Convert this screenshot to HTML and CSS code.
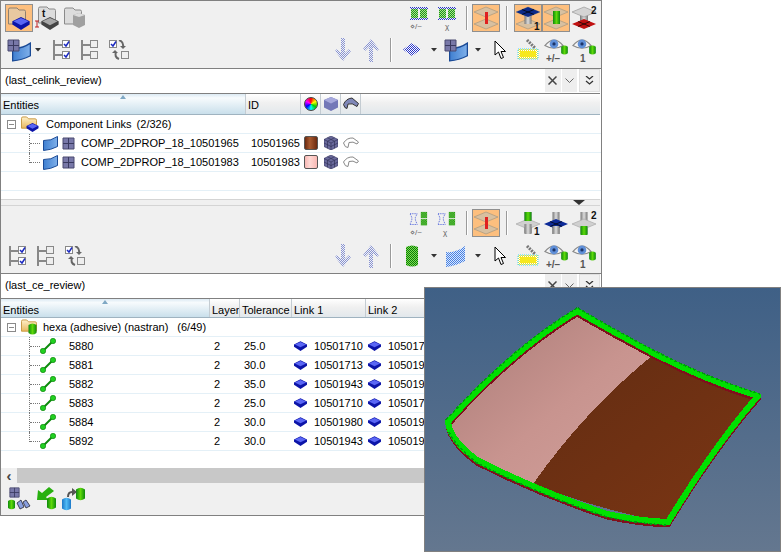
FILE: index.html
```html
<!DOCTYPE html>
<html lang="en">
<head>
<meta charset="utf-8">
<title>Entity review</title>
<link rel="stylesheet" href="styles.css">
</head>
<body>
<svg class="defs" width="0" height="0" aria-hidden="true">
  <defs>
    <linearGradient id="gBlue" x1="0" x2="1"><stop offset="0" stop-color="#3f7fd0"/><stop offset="1" stop-color="#7fb0ea"/></linearGradient>
    <linearGradient id="gGreen" x1="0" x2="1"><stop offset="0" stop-color="#0c8a0c"/><stop offset=".5" stop-color="#5ed80a"/><stop offset="1" stop-color="#0c8a0c"/></linearGradient>
    <linearGradient id="gCyl" x1="0" x2="1"><stop offset="0" stop-color="#777"/><stop offset=".5" stop-color="#ddd"/><stop offset="1" stop-color="#777"/></linearGradient>
    <linearGradient id="gAqua" x1="0" x2="1"><stop offset="0" stop-color="#1c78c8"/><stop offset=".5" stop-color="#50baf5"/><stop offset="1" stop-color="#1c78c8"/></linearGradient>
    <linearGradient id="gFold" x1="0" x2="0" y2="1"><stop offset="0" stop-color="#fff0c8"/><stop offset="1" stop-color="#e8b860"/></linearGradient>
    <linearGradient id="gPink" x1="0" y1="0" x2="1" y2="1"><stop offset="0" stop-color="#a87a76"/><stop offset=".55" stop-color="#c8948f"/><stop offset="1" stop-color="#d2a09b"/></linearGradient>
    <linearGradient id="gBrown" x1="0" y1="0" x2="1" y2="1"><stop offset="0" stop-color="#622c12"/><stop offset="1" stop-color="#7c3614"/></linearGradient>
    <pattern id="dBlue" width="2" height="2" patternUnits="userSpaceOnUse"><rect width="2" height="2" fill="#fff"/><rect width="1" height="1" fill="#2a36c8"/><rect x="1" y="1" width="1" height="1" fill="#2a36c8"/></pattern>
    <pattern id="dArrow" width="2" height="2" patternUnits="userSpaceOnUse"><rect width="2" height="2" fill="#eef0fa"/><rect width="1" height="1" fill="#8a94cc"/><rect x="1" y="1" width="1" height="1" fill="#8a94cc"/></pattern>
    <pattern id="dGreen" width="2" height="2" patternUnits="userSpaceOnUse"><rect width="2" height="2" fill="#7fe050"/><rect width="1" height="1" fill="#0a7a0a"/><rect x="1" y="1" width="1" height="1" fill="#0a7a0a"/></pattern>
    <pattern id="dSurf" width="2" height="2" patternUnits="userSpaceOnUse"><rect width="2" height="2" fill="#d8e8ff"/><rect width="1" height="1" fill="#4a80e0"/><rect x="1" y="1" width="1" height="1" fill="#4a80e0"/></pattern>
    <pattern id="dNode" width="2" height="2" patternUnits="userSpaceOnUse"><rect width="2" height="2" fill="#a8e888"/><rect width="1" height="1" fill="#1f8f1f"/><rect x="1" y="1" width="1" height="1" fill="#1f8f1f"/></pattern>
    <pattern id="dNet" width="2" height="2" patternUnits="userSpaceOnUse"><rect width="2" height="2" fill="#f4f4f4"/><rect width="1" height="1" fill="#2a36c8"/><rect x="1" y="1" width="1" height="1" fill="#2a36c8"/></pattern>
    <pattern id="dYellow" width="2" height="2" patternUnits="userSpaceOnUse"><rect width="2" height="2" fill="#fff"/><rect width="1" height="1" fill="#f4e020"/><rect x="1" y="1" width="1" height="1" fill="#f4e020"/></pattern>

    <symbol id="cube" viewBox="0 0 16 12"><path d="M8 0 16 4V7L8 12 0 7V4z" fill="#0c14a8"/><path d="M8 1 15 4 8 7.5 1 4z" fill="#5a66f4"/></symbol>
    <symbol id="grayCube" viewBox="0 0 16 12"><path d="M8 0 16 4V7L8 12 0 7V4z" fill="#444"/><path d="M8 1 15 4 8 7.5 1 4z" fill="#a8a8a8"/></symbol>
    <symbol id="folder" viewBox="0 0 17 16"><path d="M.5 13V2.500Q.5 1 2 1H6L8 3H15Q16.500 3 16.500 4.500V13z" fill="url(#gFold)" stroke="#c89840"/></symbol>
    <symbol id="folderGray" viewBox="0 0 18 18"><path d="M.5 17V2.500Q.5 1 2 1H9L11 3H16Q17.500 3 17.500 4.500V17z" fill="#dcdcdc" stroke="#8a8a8a"/></symbol>
    <symbol id="folderTan" viewBox="0 0 18 18"><path d="M.5 17V2.500Q.5 1 2 1H9L11 3H16Q17.500 3 17.500 4.500V17z" fill="#e8c8a0" stroke="#8f8070"/></symbol>
    <symbol id="surf" viewBox="0 0 15 15"><path d="M.5 4.500Q8 5 14.500.5V10.500Q8 14 .5 14.500z" fill="url(#gBlue)" stroke="#1a4a96"/></symbol>
    <symbol id="grid" viewBox="0 0 13 13"><path d="M1 1H12V12H1z" fill="#7878a8" stroke="#4a4a70"/><path d="M6.500 1V12M1 6.500H12" stroke="#3a3a60"/></symbol>
    <symbol id="surfGrid" viewBox="0 0 24 24"><use href="#surf" x="5" y="4" width="19" height="20"/><use href="#grid" x="0" y="1" width="13" height="13"/></symbol>
    <symbol id="checkAll" viewBox="0 0 20 20"><path d="M1 0V20M1 5H9M1 15H9" fill="none" stroke="#888" stroke-width="2"/><rect x="9.500" y=".5" width="7" height="7" fill="#fff" stroke="#888"/><rect x="9.500" y="11.500" width="7" height="7" fill="#fff" stroke="#888"/><path d="M11 4 13 6 16 1.500M11 15 13 17 16 12.500" fill="none" stroke="#1a28c0" stroke-width="1.500"/></symbol>
    <symbol id="checkNone" viewBox="0 0 20 20"><path d="M1 0V20M1 5H9M1 15H9" fill="none" stroke="#888" stroke-width="2"/><rect x="9.500" y=".5" width="7" height="7" fill="#eee" stroke="#888"/><rect x="9.500" y="11.500" width="7" height="7" fill="#eee" stroke="#888"/></symbol>
    <symbol id="checkSwap" viewBox="0 0 20 20"><rect x=".5" y=".5" width="7" height="7" fill="#fff" stroke="#888"/><rect x="12.500" y="11.500" width="7" height="7" fill="#eee" stroke="#888"/><path d="M2 4 4 6 7 1.500" fill="none" stroke="#1a28c0" stroke-width="1.500"/><path d="M10 0Q15 2 14 7" fill="none" stroke="#666" stroke-width="2"/><path d="M11 6H17L14 9z" fill="#666"/><path d="M10 19Q5 17 7 12" fill="none" stroke="#666" stroke-width="2"/><path d="M3 13H9L6 10z" fill="#666"/></symbol>
    <symbol id="arrowDown" viewBox="0 0 16 24"><path d="M6 0H10V15L14 11 16 13 8 23 0 13 2 11 6 15z" fill="url(#dArrow)"/></symbol>
    <symbol id="arrowUp" viewBox="0 0 16 24"><path d="M6 24H10V9L14 13 16 11 8 1 0 11 2 13 6 9z" fill="url(#dArrow)"/></symbol>
    <symbol id="cursor" viewBox="0 0 12 20"><path d="M1 1V15L4.500 12 7 18.500 9.500 17.500 7 11.500H11.500z" fill="#fff" stroke="#000"/></symbol>
    <symbol id="paint" viewBox="0 0 22 22"><rect x="1" y="10" width="20" height="10" fill="url(#dYellow)" stroke="#40d8f0" stroke-dasharray="1 1"/><rect x="3" y="12" width="16" height="6" fill="#f6e81e"/><path d="M10 1 18 9" stroke="#777" stroke-width="3" stroke-dasharray="2 1"/></symbol>
    <symbol id="eye" viewBox="0 0 18 13"><path d="M.5 7Q9-3 17.500 7 9 12 .5 7z" fill="#f4f4f4" stroke="#888"/><circle cx="9" cy="5.500" r="4" fill="#5f8fd8"/><circle cx="9" cy="5.500" r="1.500" fill="#1c3468"/></symbol>
    <symbol id="cyl" viewBox="0 0 8 12"><path d="M0 2Q4-1 8 2V10Q4 13 0 10z" fill="url(#gGreen)"/></symbol>
    <symbol id="cylBlue" viewBox="0 0 8 12"><path d="M0 2Q4-1 8 2V10Q4 13 0 10z" fill="url(#gAqua)"/></symbol>
    <symbol id="spool" viewBox="0 0 24 24"><path d="M0 6 12 1 24 6 12 11z" fill="#d8c0a0" stroke="#a89880" stroke-width=".7"/><path d="M0 18 12 13 24 18 12 23z" fill="#d8c0a0" stroke="#a89880" stroke-width=".7"/></symbol>
    <symbol id="spoolRed" viewBox="0 0 24 24"><use href="#spool"/><rect x="11" y="6" width="3" height="12" fill="#e02020"/></symbol>
    <symbol id="spoolA" viewBox="0 0 24 24"><use href="#spool"/><rect x="8.500" y="5" width="7" height="13" fill="url(#gCyl)"/><path d="M0 6 12 1 24 6 12 11z" fill="#0c2a88"/><path d="M6 3.500 18 8.500M18 3.500 6 8.500" stroke="#000" stroke-width=".7"/></symbol>
    <symbol id="spoolG" viewBox="0 0 24 24"><use href="#spool"/><rect x="9" y="5" width="7" height="13" fill="url(#gGreen)"/></symbol>
    <symbol id="spoolC" viewBox="0 0 24 24"><rect x="8" y="5" width="8" height="13" fill="url(#gCyl)"/><path d="M0 6 12 1 24 6 12 11z" fill="#d4d4d4" stroke="#999" stroke-width=".7"/><path d="M0 18 12 13 24 18 12 23z" fill="#c01010"/><path d="M6 15.500 18 20.500M18 15.500 6 20.500" stroke="#000" stroke-width=".7"/></symbol>
    <symbol id="pinA" viewBox="0 0 24 24"><rect x="8.500" y="1" width="7" height="22" fill="url(#gCyl)"/><path d="M0 13 12 8 24 13 12 18z" fill="#d0d0d0" stroke="#aaa" stroke-width=".7"/><rect x="8.500" y="13" width="7" height="9" fill="url(#gCyl)"/><rect x="8.500" y="1" width="7" height="9" fill="url(#gGreen)"/></symbol>
    <symbol id="pinB" viewBox="0 0 24 24"><rect x="8.500" y="1" width="7" height="22" fill="url(#gCyl)"/><path d="M0 13 12 8 24 13 12 18z" fill="#0c2a98"/><path d="M6 10.500 18 15.500M18 10.500 6 15.500" stroke="#000" stroke-width=".7"/><rect x="8.500" y="15" width="7" height="8" fill="url(#gCyl)"/></symbol>
    <symbol id="pinC" viewBox="0 0 24 24"><rect x="8.500" y="1" width="7" height="22" fill="url(#gCyl)"/><path d="M0 13 12 8 24 13 12 18z" fill="#d0d0d0" stroke="#aaa" stroke-width=".7"/><rect x="8.500" y="15" width="7" height="9" fill="url(#gGreen)"/></symbol>
    <symbol id="nodesA" viewBox="0 0 18 13"><rect x="1" y="1" width="7" height="11" fill="url(#dNode)"/><rect x="10" y="1" width="7" height="11" fill="url(#dNode)"/><rect x="0" y="0" width="18" height="2" fill="url(#dNet)"/><rect x="0" y="11" width="18" height="2" fill="url(#dNet)"/></symbol>
    <symbol id="nodesB" viewBox="0 0 22 20"><path d="M1 3H9L7 7V10L9 15H1L3 10V7z" fill="none" stroke="#3a50d8" stroke-dasharray="1 1"/><rect x="13" y="1" width="7" height="7" fill="url(#dGreen)"/><rect x="13" y="9" width="7" height="7" fill="url(#dGreen)"/></symbol>
    <symbol id="hexLink" viewBox="0 0 16 16"><path d="M3 13 13 3" stroke="#0c8a0c" stroke-width="2"/><circle cx="3" cy="13" r="2.700" fill="#20d020" stroke="#0a7a0a" stroke-width=".6"/><circle cx="13" cy="3" r="2.700" fill="#20d020" stroke="#0a7a0a" stroke-width=".6"/></symbol>
    <symbol id="mesh" viewBox="0 0 14 14"><path d="M7 0 14 3.500V10.500L7 14 0 10.500V3.500z" fill="#6a6a9c" stroke="#3a3a66" stroke-width=".7"/><path d="M0 3.500 7 7 14 3.500M7 7V14M3.500 1.800 10.500 5.200M10.500 1.800 3.500 5.200M3.500 5.300V12.300M10.500 5.300V12.300M0 7 7 10.500 14 7" fill="none" stroke="#2c2c50" stroke-width=".6"/></symbol>
    <symbol id="wire" viewBox="0 0 16 12"><path d="M.5 6Q4 .5 10 1L15.500 5 14 7Q10 4 6 5.500L5 10.500Q2 11 .5 6z" fill="#fff" stroke="#888"/></symbol>
    <symbol id="wireDark" viewBox="0 0 16 13"><path d="M.5 7Q3 1 9 .5L15.500 6 14 9Q9 5 5 6.500L4 11Q1.500 11 .5 7z" fill="#8088b8" stroke="#333"/></symbol>
    <symbol id="solid" viewBox="0 0 14 14"><path d="M7 0 14 3V10.500L7 14 0 10.500V3z" fill="#7478b8"/><path d="M7 0 14 3 7 6.500 0 3z" fill="#a6a8dc"/></symbol>
    <symbol id="dropDown" viewBox="0 0 6 4"><path d="M0 0H6L3 3.500z" fill="#333"/></symbol>
    <symbol id="xmark" viewBox="0 0 9 9"><path d="M.5.5 8.500 8.500M8.500.5.500 8.500" stroke="#444" stroke-width="1.500"/></symbol>
    <symbol id="chev" viewBox="0 0 9 6"><path d="M.5.500 4.500 4.500 8.500.5" fill="none" stroke="#666"/></symbol>
    <symbol id="dblChev" viewBox="0 0 9 9"><path d="M1 0 4.500 3 8 0M1 5 4.500 8 8 5" fill="none" stroke="#333" stroke-width="1.300"/></symbol>
    <symbol id="eyeCylPlus" viewBox="0 0 24 24"><use href="#eye" x="0" y="0" width="20" height="14"/><use href="#cyl" x="17" y="7" width="7" height="10"/><text x="2" y="24" class="svgeye">+/&#8722;</text></symbol>
    <symbol id="eyeCylOne" viewBox="0 0 24 24"><use href="#eye" x="0" y="0" width="20" height="14"/><use href="#cyl" x="17" y="7" width="7" height="10"/><text x="8" y="24" class="svgeye">1</text></symbol>
  </defs>
</svg>

<div class="panel">
  <div class="toolbar">
    <div class="tbrow">
      <div class="btn on"><svg class="i24" viewBox="0 0 24 24"><use href="#folderTan" x="1" y="1" width="18" height="18"/><use href="#cube" x="5" y="11" width="18" height="13"/></svg></div>
      <div class="btn"><svg class="i24" viewBox="0 0 24 24"><use href="#folderGray" x="3" y="0" width="18" height="18"/><use href="#grayCube" x="6" y="11" width="18" height="13"/><text x="7" y="11" class="svgbold">t</text><path d="M0 15H4M2 15V21M0 21H4" stroke="#c02020" stroke-width="1"/></svg></div>
      <div class="btn"><svg class="i24" viewBox="0 0 24 24"><use href="#folderGray" x="1" y="1" width="18" height="18"/><path d="M10 9 16 7 22 9V19L16 22 10 19z" fill="#a0a0a0"/><path d="M10 9 16 7 22 9 16 11z" fill="#dcdcdc"/></svg></div>
      <div class="fill"></div>
      <div class="btn"><svg class="i24" viewBox="0 0 24 24"><use href="#nodesA" x="3" y="1" width="18" height="13"/><text x="3" y="23" class="svgtiny">&#8900;/~</text></svg></div>
      <div class="btn"><svg class="i24" viewBox="0 0 24 24"><use href="#nodesA" x="3" y="1" width="18" height="13"/><text x="10" y="23" class="svgtiny">&#967;</text></svg></div>
      <div class="sep"></div>
      <div class="btn on"><svg class="i24"><use href="#spoolRed"/></svg></div>
      <div class="sep sep-wide"></div>
      <div class="btn on"><svg class="i24"><use href="#spoolA"/><text x="18" y="24" class="svgbold">1</text></svg></div>
      <div class="btn on"><svg class="i24"><use href="#spoolG"/></svg></div>
      <div class="btn"><svg class="i24"><use href="#spoolC"/><text x="19" y="8" class="svgbold">2</text></svg></div>
    </div>
    <div class="tbrow">
      <div class="btn"><svg class="i24"><use href="#surfGrid"/></svg></div>
      <div class="drop first"><svg class="i6"><use href="#dropDown"/></svg></div>
      <div class="btn"><svg class="i20"><use href="#checkAll"/></svg></div>
      <div class="btn"><svg class="i20"><use href="#checkNone"/></svg></div>
      <div class="btn"><svg class="i20"><use href="#checkSwap"/></svg></div>
      <div class="fill"></div>
      <div class="btn"><svg class="iarrow"><use href="#arrowDown"/></svg></div>
      <div class="btn"><svg class="iarrow"><use href="#arrowUp"/></svg></div>
      <div class="sep sep-mid"></div>
      <div class="btn"><svg class="i24" viewBox="0 0 24 24"><path d="M12 5 21 11.500 12 18 3 11.500z" fill="url(#dBlue)"/></svg></div>
      <div class="drop"><svg class="i6"><use href="#dropDown"/></svg></div>
      <div class="btn"><svg class="i24"><use href="#surfGrid"/></svg></div>
      <div class="drop"><svg class="i6"><use href="#dropDown"/></svg></div>
      <div class="btn"><svg class="icursor"><use href="#cursor"/></svg></div>
      <div class="btn"><svg class="i22"><use href="#paint"/></svg></div>
      <div class="btn"><svg class="i24"><use href="#eyeCylPlus"/></svg></div>
      <div class="btn"><svg class="i24"><use href="#eyeCylOne"/></svg></div>
    </div>
  </div>

  <div class="search">
    <div class="search-field">(last_celink_review)</div>
    <div class="sbtn"><svg class="i9"><use href="#xmark"/></svg></div>
    <div class="sbtn"><svg class="i9s"><use href="#chev"/></svg></div>
    <div class="sbtn wide"><svg class="i9"><use href="#dblChev"/></svg></div>
  </div>

  <div class="table table-a">
    <div class="thead cols-a">
      <div class="th sorted">Entities</div>
      <div class="th">ID</div>
      <div class="th thi"><span class="wheel"></span></div>
      <div class="th thi"><svg class="i14"><use href="#solid"/></svg></div>
      <div class="th thi"><svg class="i16"><use href="#wireDark"/></svg></div>
    </div>
    <div class="tr cols-a">
      <div class="td name">
        <span class="toggle"></span>
        <svg class="ifold" viewBox="0 0 18 16"><use href="#folder" x="0" y="0" width="16" height="15"/><use href="#cube" x="5" y="7" width="13" height="9"/></svg>
        <span class="gtext-a">Component Links</span><span class="gcount-a">(2/326)</span>
      </div>
    </div>
    <div class="tr cols-a">
      <div class="td name"><span class="conn"></span><svg class="i15 msurf"><use href="#surf"/></svg><svg class="i13 mgrid"><use href="#grid"/></svg><span class="comp">COMP_2DPROP_18_10501965</span></div>
      <div class="td idv">10501965</div>
      <div class="td tdi"><span class="swatch brown"></span></div>
      <div class="td tdi"><svg class="i14"><use href="#mesh"/></svg></div>
      <div class="td tdi"><svg class="i16"><use href="#wire"/></svg></div>
    </div>
    <div class="tr cols-a">
      <div class="td name"><span class="conn last"></span><svg class="i15 msurf"><use href="#surf"/></svg><svg class="i13 mgrid"><use href="#grid"/></svg><span class="comp">COMP_2DPROP_18_10501983</span></div>
      <div class="td idv">10501983</div>
      <div class="td tdi"><span class="swatch pink"></span></div>
      <div class="td tdi"><svg class="i14"><use href="#mesh"/></svg></div>
      <div class="td tdi"><svg class="i16"><use href="#wire"/></svg></div>
    </div>
    <div class="tr"></div>
  </div>

  <div class="splitter"><span class="split-tri"></span></div>

  <div class="toolbar">
    <div class="tbrow">
      <div class="fill"></div>
      <div class="btn"><svg class="i24" viewBox="0 0 24 24"><use href="#nodesB" x="0" y="0" width="24" height="18"/><text x="3" y="24" class="svgtiny">&#8900;/~</text></svg></div>
      <div class="btn"><svg class="i24" viewBox="0 0 24 24"><use href="#nodesB" x="0" y="0" width="24" height="18"/><text x="8" y="24" class="svgtiny">&#967;</text></svg></div>
      <div class="sep"></div>
      <div class="btn on"><svg class="i24"><use href="#spoolRed"/></svg></div>
      <div class="sep sep-wide"></div>
      <div class="btn"><svg class="i24"><use href="#pinA"/><text x="18" y="24" class="svgbold">1</text></svg></div>
      <div class="btn"><svg class="i24"><use href="#pinB"/></svg></div>
      <div class="btn"><svg class="i24"><use href="#pinC"/><text x="19" y="8" class="svgbold">2</text></svg></div>
    </div>
    <div class="tbrow rowgap">
      <div class="btn"><svg class="i20"><use href="#checkAll"/></svg></div>
      <div class="btn"><svg class="i20"><use href="#checkNone"/></svg></div>
      <div class="btn"><svg class="i20"><use href="#checkSwap"/></svg></div>
      <div class="fill"></div>
      <div class="btn"><svg class="iarrow"><use href="#arrowDown"/></svg></div>
      <div class="btn"><svg class="iarrow"><use href="#arrowUp"/></svg></div>
      <div class="sep sep-mid"></div>
      <div class="btn"><svg class="i24" viewBox="0 0 24 24"><path d="M6 3Q12 0 18 3V21Q12 24 6 21z" fill="url(#dGreen)"/></svg></div>
      <div class="drop"><svg class="i6"><use href="#dropDown"/></svg></div>
      <div class="btn"><svg class="i24" viewBox="0 0 24 24"><path d="M2 8Q12 9 21 2V17Q12 22 2 23z" fill="url(#dSurf)"/></svg></div>
      <div class="drop"><svg class="i6"><use href="#dropDown"/></svg></div>
      <div class="btn"><svg class="icursor"><use href="#cursor"/></svg></div>
      <div class="btn"><svg class="i22"><use href="#paint"/></svg></div>
      <div class="btn"><svg class="i24"><use href="#eyeCylPlus"/></svg></div>
      <div class="btn"><svg class="i24"><use href="#eyeCylOne"/></svg></div>
    </div>
  </div>

  <div class="search">
    <div class="search-field">(last_ce_review)</div>
    <div class="sbtn"><svg class="i9"><use href="#xmark"/></svg></div>
    <div class="sbtn"><svg class="i9s"><use href="#chev"/></svg></div>
    <div class="sbtn wide"><svg class="i9"><use href="#dblChev"/></svg></div>
  </div>

  <div class="table table-b">
    <div class="thead short cols-b">
      <div class="th sorted">Entities</div>
      <div class="th">Layer</div>
      <div class="th">Tolerance</div>
      <div class="th">Link 1</div>
      <div class="th">Link 2</div>
    </div>
    <div class="tr">
      <div class="td name">
        <span class="toggle"></span>
        <svg class="ifold" viewBox="0 0 18 16"><use href="#folder" x="0" y="0" width="16" height="15"/><use href="#cyl" x="7" y="4" width="9" height="12"/></svg>
        <span class="gtext-b">hexa (adhesive) (nastran)</span><span class="gcount-b">(6/49)</span>
      </div>
    </div>
    <div class="tr cols-b"><div class="td name"><span class="conn"></span><svg class="i16"><use href="#hexLink"/></svg><span class="eid">5880</span></div><div class="td layer">2</div><div class="td tol">25.0</div><div class="td link"><svg class="icube"><use href="#cube"/></svg>10501710</div><div class="td link"><svg class="icube"><use href="#cube"/></svg>10501719</div></div>
    <div class="tr cols-b"><div class="td name"><span class="conn"></span><svg class="i16"><use href="#hexLink"/></svg><span class="eid">5881</span></div><div class="td layer">2</div><div class="td tol">30.0</div><div class="td link"><svg class="icube"><use href="#cube"/></svg>10501713</div><div class="td link"><svg class="icube"><use href="#cube"/></svg>10501943</div></div>
    <div class="tr cols-b"><div class="td name"><span class="conn"></span><svg class="i16"><use href="#hexLink"/></svg><span class="eid">5882</span></div><div class="td layer">2</div><div class="td tol">35.0</div><div class="td link"><svg class="icube"><use href="#cube"/></svg>10501943</div><div class="td link"><svg class="icube"><use href="#cube"/></svg>10501980</div></div>
    <div class="tr cols-b"><div class="td name"><span class="conn"></span><svg class="i16"><use href="#hexLink"/></svg><span class="eid">5883</span></div><div class="td layer">2</div><div class="td tol">25.0</div><div class="td link"><svg class="icube"><use href="#cube"/></svg>10501710</div><div class="td link"><svg class="icube"><use href="#cube"/></svg>10501713</div></div>
    <div class="tr cols-b"><div class="td name"><span class="conn"></span><svg class="i16"><use href="#hexLink"/></svg><span class="eid">5884</span></div><div class="td layer">2</div><div class="td tol">30.0</div><div class="td link"><svg class="icube"><use href="#cube"/></svg>10501980</div><div class="td link"><svg class="icube"><use href="#cube"/></svg>10501943</div></div>
    <div class="tr cols-b"><div class="td name"><span class="conn last"></span><svg class="i16"><use href="#hexLink"/></svg><span class="eid">5892</span></div><div class="td layer">2</div><div class="td tol">30.0</div><div class="td link"><svg class="icube"><use href="#cube"/></svg>10501943</div><div class="td link"><svg class="icube"><use href="#cube"/></svg>10501980</div></div>
  </div>

  <div class="hscroll"><div class="hleft">&#8249;</div><div class="htrack"></div></div>

  <div class="bottombar">
    <div class="btn"><svg class="i24" viewBox="0 0 24 24"><use href="#grid" x="3" y="0" width="11" height="11"/><use href="#cyl" x="2" y="12" width="7" height="11"/><path d="M11 16 15 13 18 20 14 22zM17 15 20 13 24 19 20 21z" fill="#8aa0e0" stroke="#223" stroke-width=".8"/></svg></div>
    <div class="btn"><svg class="i24" viewBox="0 0 24 24"><path d="M15 0 20 4 12 10 14 13H3L4 3 8 6z" fill="#28b010"/><use href="#cyl" x="13" y="9" width="9" height="14"/></svg></div>
    <div class="btn"><svg class="i24" viewBox="0 0 24 24"><use href="#cyl" x="14" y="0" width="9" height="14"/><use href="#cylBlue" x="0" y="10" width="9" height="14"/><path d="M5 10Q5 4 10 4V1L15 5 10 9V6Q7 6 7 10z" fill="#555"/></svg></div>
  </div>
</div>

<div class="viewport">
  <svg class="scene" viewBox="425 288 355 263" shape-rendering="crispEdges">
    <path d="M577 311Q510 352 448 422Q450 440 477 460Q505 473 533 484Q585 410 653 355Q615 334 577 311z" fill="url(#gPink)"/>
    <path d="M653 355Q705 380 758 396Q715 450 668 523Q600 510 533 484Q585 410 653 355z" fill="url(#gBrown)"/>
    <path class="edge-red" d="M577 311Q510 352 448 422Q450 440 477 460Q540 492 607 514Q640 521 668 522Q715 445 758 396Q705 380 653 353Q615 333 577 311z"/>
    <path class="edge-green" d="M577 311Q510 352 448 422Q450 440 477 460Q540 492 607 514Q640 521 668 522Q715 445 758 396Q705 380 653 353Q615 333 577 311z"/>
    <path class="edge-dark" d="M577 308Q510 349 446 420M578 308Q615 330 653 350Q705 377 760 394M449 432Q455 446 477 463Q540 495 607 517Q640 524 668 525"/>
  </svg>
</div>
</body>
</html>
```
FILE: styles.css
```css
* { box-sizing: border-box; }
html, body { margin: 0; padding: 0; background: #fff; }
body {
  width: 781px;
  height: 552px;
  overflow: hidden;
  position: relative;
  font-family: "Liberation Sans", Arial, sans-serif;
  font-size: 11px;
  color: #000;
}
.defs { position: absolute; }

.panel {
  width: 602px;
  height: 516px;
  border: 1px solid #808080;
  background: #f0f0f0;
  display: flex;
  flex-direction: column;
}

.toolbar {
  height: 68px;
  flex: none;
  padding: 3px 3px 0 4px;
  border-bottom: 1px solid #808080;
  display: flex;
  flex-direction: column;
  gap: 4px;
  background: #f0f0f0;
}
.tbrow { display: flex; align-items: center; height: 28px; }
.rowgap { margin-top: 1px; }
.fill { flex: 1; }

.btn {
  width: 28px;
  height: 28px;
  flex: none;
  display: flex;
  align-items: center;
  justify-content: center;
}
.btn.on { background: #fdbf7e; border: 1px solid #8f8f8f; }
.drop { width: 16px; height: 28px; flex: none; display: flex; align-items: center; justify-content: center; }
.drop.first { width: 16px; padding-right: 7px; }
.sep { width: 2px; height: 24px; background: #9a9a9a; border-right: 1px solid #fff; margin: 0 4px 0 5px; flex: none; }
.sep-wide { margin: 0 6px; }
.sep-mid { margin: 0 6px 0 5px; }

svg { display: block; overflow: visible; flex: none; }
.i24 { width: 24px; height: 24px; }
.i22 { width: 22px; height: 22px; }
.i20 { width: 20px; height: 20px; }
.i16 { width: 16px; height: 16px; }
.i15 { width: 15px; height: 15px; }
.i14 { width: 14px; height: 14px; }
.i13 { width: 13px; height: 13px; }
.i9 { width: 9px; height: 9px; }
.i9s { width: 9px; height: 6px; }
.i6 { width: 6px; height: 4px; }
.iarrow { width: 16px; height: 24px; }
.icursor { width: 12px; height: 20px; }
.icube { width: 13px; height: 10px; margin-right: 7px; }
.ifold { width: 18px; height: 16px; margin-left: 5px; }
.mgrid { margin-left: 4px; }
.msurf { margin-left: 3px; }

.svgbold { font: bold 10px "Liberation Sans", sans-serif; fill: #111; }
.svgtiny { font: 8px "Liberation Sans", sans-serif; fill: #666; }
.svgeye { font: bold 10px "Liberation Sans", sans-serif; fill: #555; }

.search {
  height: 24px;
  flex: none;
  display: flex;
  background: #fff;
}
.search-field {
  width: 544px;
  flex: none;
  padding: 5px 0 0 4px;
}
.sbtn {
  width: 16px;
  height: 23px;
  margin-right: 1px;
  background: #eeeeee;
  display: flex;
  align-items: center;
  justify-content: center;
}
.sbtn.wide { width: 21px; margin-left: 1px; background: #f0f0f0; border: 1px solid #e0e0e0; }

.table { flex: none; background: #fff; }
.table-a { height: 106px; }
.table-b { height: 170px; }

.cols-a { display: grid; grid-template-columns: 245px 55px 20px 20px 20px 1fr; }
.cols-b { display: grid; grid-template-columns: 209px 30px 52px 74px 74px 1fr; }

.thead {
  height: 22px;
  margin-right: 1px;
  border-top: 1px solid #808080;
  border-bottom: 1px solid #9fb3c0;
  background: linear-gradient(#ffffff, #f0f0f0 45%, #e2e8ec);
}
.thead.short { height: 20px; }
.th {
  height: 100%;
  padding: 2px 0 0 2px;
  border-right: 1px solid #c4ccd2;
  line-height: 18px;
  overflow: hidden;
  white-space: nowrap;
}
.th.sorted {
  background: linear-gradient(#dceaf3 0, #f7fbfd 20%, #c9dfeb 100%);
  position: relative;
}
.th.sorted::before {
  content: "";
  position: absolute;
  right: 119px;
  top: 1px;
  border: 3px solid transparent;
  border-top: 0;
  border-bottom: 4px solid #7fa8c4;
  width: 0;
}
.table-b .th.sorted::before { right: 101px; }
.thi { display: flex; align-items: center; justify-content: center; padding: 0; }
.wheel {
  width: 14px;
  height: 14px;
  border-radius: 50%;
  background: conic-gradient(#f00, #ff0, #0c0, #0ff, #00f, #f0f, #f00);
  border: 1px solid #444;
}

.tr {
  height: 19px;
  border-bottom: 1px solid #e4f0f7;
  background: #fff;
}
.td {
  height: 18px;
  display: flex;
  align-items: center;
  white-space: nowrap;
}
.toggle {
  width: 9px;
  height: 9px;
  margin-left: 6px;
  border: 1px solid #8a8a8a;
  background: linear-gradient(#8a8a8a, #8a8a8a) center / 5px 1px no-repeat;
  flex: none;
}
.gtext-a { margin-left: 7px; }
.gcount-a { margin-left: 5px; }
.gtext-b { margin-left: 4px; }
.gcount-b { margin-left: 9px; }
.conn {
  width: 11px;
  height: 19px;
  margin-left: 28px;
  align-self: flex-start;
  flex: none;
  border-left: 1px dotted #777;
}
.conn::after {
  content: "";
  display: block;
  height: 9px;
  border-bottom: 1px dotted #777;
}
.conn.last { height: 10px; }
.comp { margin-left: 6px; }
.eid { margin-left: 13px; }
.idv { padding-left: 5px; }
.tdi { justify-content: center; }
.layer { padding-left: 4px; }
.tol { padding-left: 4px; }
.link { padding-left: 2px; overflow: hidden; }

.swatch { width: 14px; height: 14px; border: 1px solid #555; border-radius: 2px; }
.swatch.brown { background: linear-gradient(90deg, #6b2a10, #a85a30 40%, #6b2a10); }
.swatch.pink { background: linear-gradient(90deg, #f8b8b4, #ffd8d4 40%, #f8b8b4); }

.splitter {
  height: 7px;
  flex: none;
  margin-right: 1px;
  border-top: 1px solid #d4d4d4;
  border-bottom: 1px solid #d4d4d4;
  background: #f0f0f0;
  display: flex;
  justify-content: flex-end;
  padding-right: 15px;
}
.split-tri {
  width: 0;
  height: 0;
  border: 6px solid transparent;
  border-top: 5px solid #333;
  border-bottom: 0;
}

.hscroll { height: 15px; flex: none; display: flex; background: #c8c8c8; }
.hleft { width: 16px; background: #f0f0f0; display: flex; align-items: center; justify-content: center; font: bold 15px "Liberation Sans", sans-serif; color: #444; line-height: 13px; }
.htrack { flex: 1; }

.bottombar {
  flex: 1;
  display: flex;
  align-items: center;
  padding-left: 3px;
  background: #f0f0f0;
}

.viewport {
  position: absolute;
  left: 424px;
  top: 287px;
  width: 357px;
  height: 265px;
  border: 1px solid #808080;
  background: linear-gradient(#3f6086, #64778f);
}
.scene { width: 355px; height: 263px; }
.edge-red { fill: none; stroke: #80101c; stroke-width: 5; transform: translateY(3px); stroke-linejoin: round; }
.edge-green { fill: none; stroke: #00e000; stroke-width: 6; stroke-linejoin: round; }
.edge-dark { fill: none; stroke: #009a10; stroke-width: 1.5; stroke-dasharray: 3 2; }
```
